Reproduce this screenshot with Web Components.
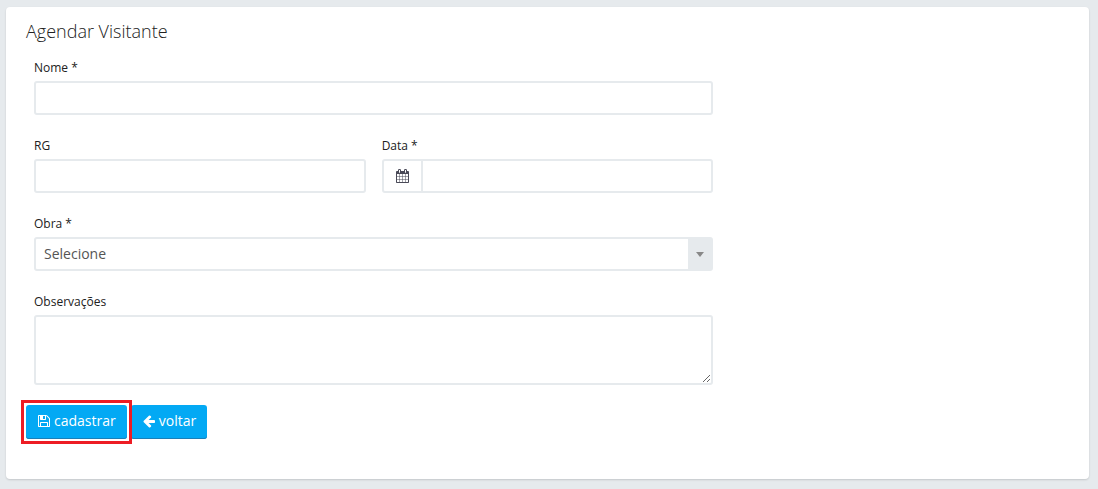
<!DOCTYPE html>
<html lang="pt-BR">

<head>
  <meta charset="UTF-8">
  <meta name="viewport" content="width=device-width, initial-scale=1.0">
  <title>Agendar Visitante</title>
  <style>
    body {
      margin: 0;
      padding: 7px 9px 10px 6px;
      background: #e6eaed;
      color: #212121;
      font-family: "Open Sans", "Liberation Sans", sans-serif;
      font-size: 14px;
      line-height: 20px;
    }
  </style>
</head>

<body>
  <panel-card heading="Agendar Visitante">
    <form-grid>
      <form-field label="Nome *" name="nome" wide></form-field>
      <form-field label="RG" name="rg"></form-field>
      <form-field label="Data *" name="data" icon="calendar"></form-field>
      <form-field label="Obra *" name="obra" type="select" options="Selecione" wide></form-field>
      <form-field label="Observações" name="observacoes" type="textarea" wide></form-field>
    </form-grid>
    <action-button slot="actions" icon="save" highlighted>cadastrar</action-button>
    <action-button slot="actions" icon="back">voltar</action-button>
  </panel-card>

  <script>
    const icons = {
      save: {
        box: '128 0 1536 1792',
        path: 'M512 1536h768v-384h-768v384zm896 0h128v-896q0-14-10-38.5t-20-34.5l-281-281q-10-10-34-20t-39-10v416q0 40-28 68t-68 28h-576q-40 0-68-28t-28-68v-416h-128v1280h128v-416q0-40 28-68t68-28h832q40 0 68 28t28 68v416zm-384-928v-320q0-13-9.5-22.5t-22.5-9.5h-192q-13 0-22.5 9.5t-9.5 22.5v320q0 13 9.5 22.5t22.5 9.5h192q13 0 22.5-9.5t9.5-22.5zm640 32v928q0 40-28 68t-68 28h-1344q-40 0-68-28t-28-68v-1344q0-40 28-68t68-28h928q40 0 88 20t76 48l280 280q28 28 48 76t20 88z'
      },
      back: {
        box: '128 0 1536 1792',
        path: 'M1664 896v128q0 53-32.5 90.5t-84.5 37.5h-704l293 294q38 36 38 90t-38 90l-75 76q-37 37-90 37-52 0-91-37l-651-652q-37-37-37-90 0-52 37-91l651-650q38-38 91-38 52 0 90 38l75 74q38 38 38 91t-38 91l-293 293h704q52 0 84.5 37.5t32.5 90.5z'
      },
      calendar: {
        box: '64 0 1664 1792',
        path: 'M192 1664h288v-288h-288v288zm352 0h320v-288h-320v288zm-352-352h288v-320h-288v320zm352 0h320v-320h-320v320zm-352-384h288v-288h-288v288zm736 736h320v-288h-320v288zm-384-736h320v-288h-320v288zm768 736h288v-288h-288v288zm-384-352h320v-320h-320v320zm-352-864v-288q0-13-9.5-22.5t-22.5-9.5h-64q-13 0-22.5 9.5t-9.5 22.5v288q0 13 9.5 22.5t22.5 9.5h64q13 0 22.5-9.5t9.5-22.5zm736 864h288v-320h-288v320zm-384-384h320v-288h-320v288zm384 0h288v-288h-288v288zm32-480v-288q0-13-9.5-22.5t-22.5-9.5h-64q-13 0-22.5 9.5t-9.5 22.5v288q0 13 9.5 22.5t22.5 9.5h64q13 0 22.5-9.5t9.5-22.5zm384-64v1280q0 52-38 90t-90 38h-1408q-52 0-90-38t-38-90v-1280q0-52 38-90t90-38h128v-96q0-66 47-113t113-47h64q66 0 113 47t47 113v96h384v-96q0-66 47-113t113-47h64q66 0 113 47t47 113v96h128q52 0 90 38t38 90z'
      }
    };

    function icon(name, width) {
      const { box, path } = icons[name];
      return `<svg width="${width}" height="14" viewBox="${box}" fill="currentColor" aria-hidden="true"><path d="${path}"/></svg>`;
    }

    // white panel with a title, a body and a row of actions
    class PanelCard extends HTMLElement {
      static style = `
        :host {
          display: block;
          padding: 14px 20px 40px;
          background: #fff;
          border-radius: 4px;
          box-shadow: 0 1px 2px rgba(0, 0, 0, .15);
        }
        h1 {
          margin: 0 0 18px;
          font-size: 18px;
          font-weight: 300;
          line-height: 20px;
        }
        .actions {
          display: flex;
          gap: 4px;
          margin-top: 20px;
        }
      `;
      constructor() {
        super();
        this.attachShadow({ mode: 'open' });
        this.shadowRoot.innerHTML = `
          <style>${this.constructor.style}</style>
          <h1>${this.getAttribute('heading')}</h1>
          <slot></slot>
          <div class="actions"><slot name="actions"></slot></div>
        `;
      }
    }

    // two columns over two thirds of the panel
    class FormGrid extends HTMLElement {
      static style = `
        :host {
          display: grid;
          grid-template-columns: 1fr 1fr;
          gap: 22px 16px;
          box-sizing: border-box;
          width: calc(100% * 2 / 3);
          padding: 0 8px;
        }
        ::slotted([wide]) {
          grid-column: 1 / -1;
        }
      `;
      constructor() {
        super();
        this.attachShadow({ mode: 'open' });
        this.shadowRoot.innerHTML = `<style>${this.constructor.style}</style><slot></slot>`;
      }
    }

    // label and its control
    class FormField extends HTMLElement {
      static style = `
        :host {
          display: block;
          min-width: 0;
        }
        label {
          display: block;
          margin-bottom: 4px;
          font-size: 12px;
          line-height: 18px;
        }
        .control {
          display: flex;
          box-sizing: border-box;
          border: 2px solid #e6eaed;
          border-radius: 3px;
          background: #fff;
        }
        .control:focus-within {
          border-color: #03a9f4;
        }
        .addon {
          display: flex;
          align-items: center;
          justify-content: center;
          width: 37px;
          border-right: 2px solid #e6eaed;
          color: #4a4a58;
        }
        input, select, textarea {
          flex: 1;
          box-sizing: border-box;
          min-width: 0;
          height: 30px;
          margin: 0;
          padding: 4px 8px;
          border: 0;
          outline: 0;
          background: transparent;
          color: #555;
          font: inherit;
        }
        select {
          appearance: none;
        }
        textarea {
          height: 66px;
          resize: vertical;
        }
        .arrow {
          display: flex;
          align-items: center;
          justify-content: center;
          width: 23px;
          background: #e6eaed;
          color: #888;
          pointer-events: none;
        }
      `;
      constructor() {
        super();
        this.attachShadow({ mode: 'open' });
        this.render();
      }
      render() {
        const name = this.getAttribute('name');
        const addon = this.getAttribute('icon');
        this.shadowRoot.innerHTML = `
          <style>${this.constructor.style}</style>
          <label for="${name}">${this.getAttribute('label')}</label>
          <div class="control">
            ${addon ? `<span class="addon">${icon(addon, 13)}</span>` : ''}
            ${this.control(name)}
          </div>
        `;
      }
      control(name) {
        switch (this.getAttribute('type')) {
          case 'select': {
            const options = this.getAttribute('options').split(',');
            return `
              <select id="${name}" name="${name}">${options.map(o => `<option>${o}</option>`).join('')}</select>
              <span class="arrow"><svg width="8" height="5" viewBox="0 0 8 5" fill="currentColor" aria-hidden="true"><path d="M0 0h8L4 5z"/></svg></span>
            `;
          }
          case 'textarea':
            return `<textarea id="${name}" name="${name}"></textarea>`;
          default:
            return `<input type="text" id="${name}" name="${name}">`;
        }
      }
    }

    class ActionButton extends HTMLElement {
      static style = `
        :host {
          display: block;
        }
        :host([highlighted]) {
          position: relative;
          z-index: 1;
          outline: 3px solid #ed1c24;
          outline-offset: 2px;
        }
        button {
          display: flex;
          align-items: center;
          gap: 4px;
          height: 34px;
          padding: 0 11px 2px 12px;
          border: 0;
          border-radius: 3px;
          background: #03a9f4;
          box-shadow: inset 0 -1px 0 #1a7fb8;
          color: #fff;
          font: inherit;
          cursor: pointer;
        }
      `;
      constructor() {
        super();
        this.attachShadow({ mode: 'open' });
        this.shadowRoot.innerHTML = `
          <style>${this.constructor.style}</style>
          <button type="button">${icon(this.getAttribute('icon'), 12)}<slot></slot></button>
        `;
      }
    }

    customElements.define('panel-card', PanelCard);
    customElements.define('form-grid', FormGrid);
    customElements.define('form-field', FormField);
    customElements.define('action-button', ActionButton);
  </script>
</body>

</html>
